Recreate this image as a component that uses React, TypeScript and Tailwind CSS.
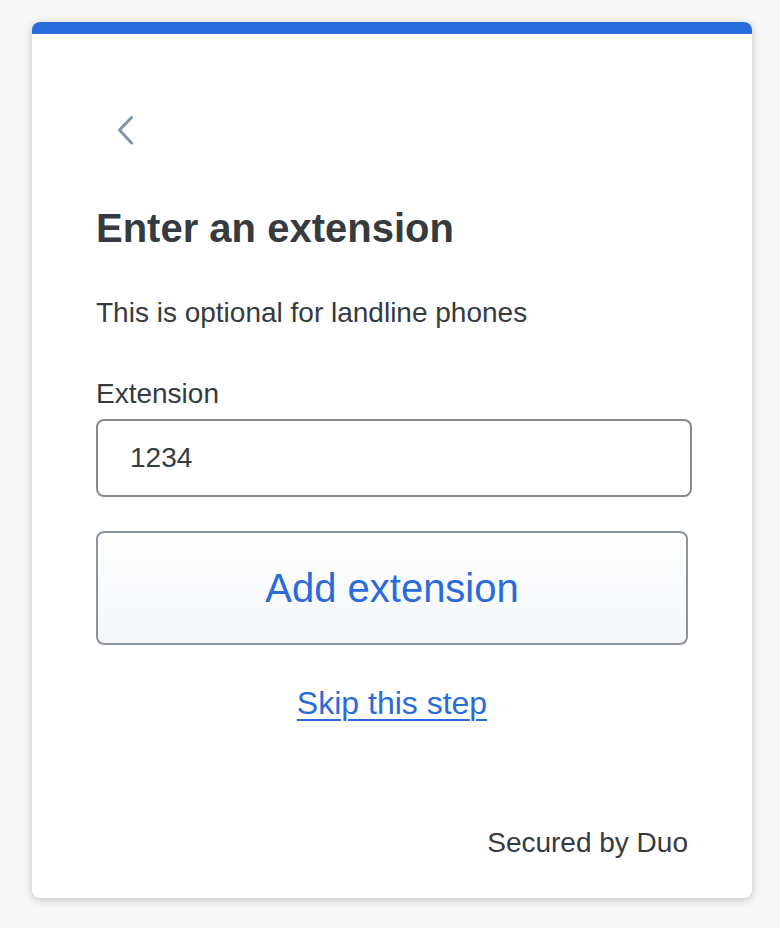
export default function App() {
  return (
    <div className="min-h-[928px] w-full bg-[#f7f7f7] pt-[22px] pl-[32px]" style={{ fontFamily: '"Liberation Sans", Arial, sans-serif' }}>
      <div className="w-[720px] h-[876px] bg-white rounded-[8px] overflow-hidden shadow-[0_2px_8px_rgba(0,0,0,0.22)] flex flex-col">
        <div className="h-[12px] bg-[#2a6bdb] shrink-0" />
        <div className="flex flex-col px-[64px] flex-1 pb-[37px]">
          <div className="mt-[82px] h-[28px] flex items-center">
            <svg width="20" height="30" viewBox="0 0 20 30" className="ml-[19px]" fill="none">
              <path d="M16.5 2.5 L4.5 15 L16.5 28" stroke="#8293a8" strokeWidth="3" strokeLinecap="round" strokeLinejoin="round" />
            </svg>
          </div>
          <h1 className="mt-[60px] text-[40px] leading-[48px] font-bold text-[#363b3f]">Enter an extension</h1>
          <p className="mt-[43px] text-[28px] leading-[36px] text-[#363b3f]">This is optional for landline phones</p>
          <label className="mt-[45px] text-[28px] leading-[36px] text-[#363b3f]">Extension</label>
          <div className="mt-[7px] w-[calc(100%+4px)] h-[78px] border-2 border-[#8a8a8a] rounded-[8px] flex items-center pl-[32px] text-[28px] text-[#363b3f]">
            1234
          </div>
          <button className="mt-[34px] h-[114px] w-full border-2 border-[#8c949e] rounded-[8px] bg-gradient-to-b from-white to-[#f4f6f9] text-[40px] text-[#2a6bdb] flex items-center justify-center">
            Add extension
          </button>
          <div className="mt-[38px] flex justify-center">
            <a className="text-[32px] leading-[40px] text-[#2a6bdb] underline decoration-2 underline-offset-[5px]" href="#">Skip this step</a>
          </div>
          <div className="mt-auto flex justify-end">
            <span className="text-[28px] leading-[36px] text-[#363b3f]">Secured by Duo</span>
          </div>
        </div>
      </div>
    </div>
  );
}
